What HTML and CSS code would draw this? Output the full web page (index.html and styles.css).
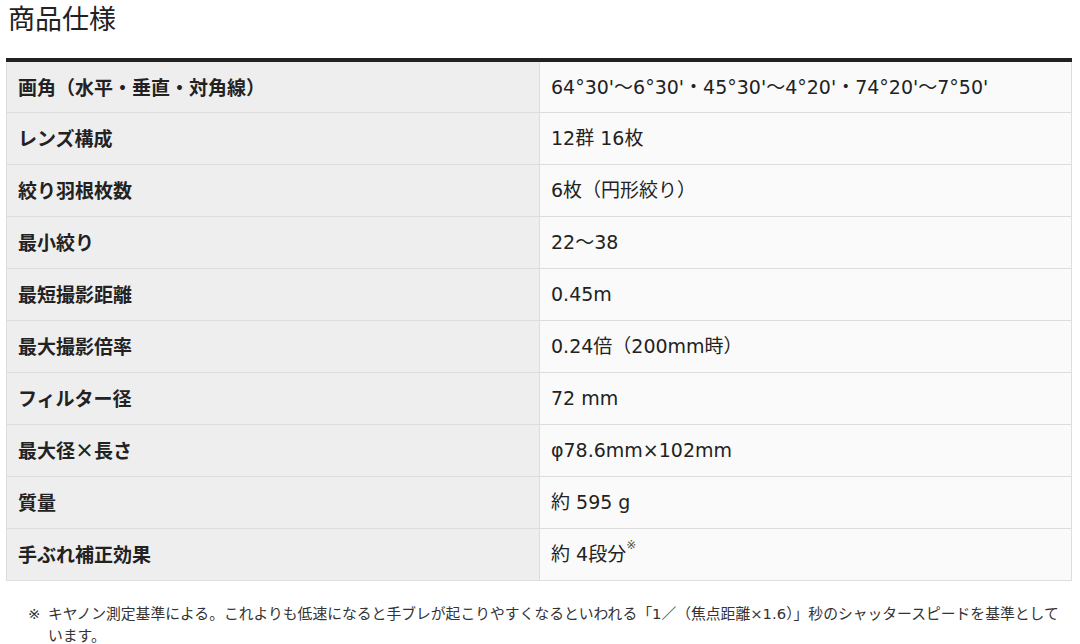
FILE: index.html
```html
<!DOCTYPE html>
<html lang="ja">
<head>
<meta charset="utf-8">
<link rel="stylesheet" href="styles.css">
</head>
<body>
<div class="page">
  <h2 class="title">商品仕様</h2>
  <table class="spec">
    <tbody>
      <tr><th>画角（水平・垂直・対角線）</th><td>64°30'～6°30'・45°30'～4°20'・74°20'～7°50'</td></tr>
      <tr><th>レンズ構成</th><td>12群 16枚</td></tr>
      <tr><th>絞り羽根枚数</th><td>6枚（円形絞り）</td></tr>
      <tr><th>最小絞り</th><td>22～38</td></tr>
      <tr><th>最短撮影距離</th><td>0.45m</td></tr>
      <tr><th>最大撮影倍率</th><td>0.24倍（200mm時）</td></tr>
      <tr><th>フィルター径</th><td>72 mm</td></tr>
      <tr><th>最大径×長さ</th><td>φ78.6mm×102mm</td></tr>
      <tr><th>質量</th><td>約 595 g</td></tr>
      <tr><th>手ぶれ補正効果</th><td>約 4段分<sup class="mark">※</sup></td></tr>
    </tbody>
  </table>
  <p class="note"><span class="note-mark">※</span>キヤノン測定基準による。これよりも低速になると手ブレが起こりやすくなるといわれる「1／（焦点距離×1.6）」秒のシャッタースピードを基準としています。</p>
</div>
</body>
</html>
```
FILE: styles.css
```css
html, body {
  margin: 0;
  padding: 0;
  background: #fff;
}
body {
  font-family: "DejaVu Sans", "Noto Sans CJK JP", sans-serif;
  color: #222;
}
.page {
  padding: 0 8px 0 6px;
}
.title {
  margin: 0;
  padding: 0 0 0 2px;
  font-family: "Noto Sans CJK JP", sans-serif;
  font-size: 27px;
  font-weight: normal;
  line-height: 36px;
  height: 58px;
  color: #222;
}
.spec {
  width: 1066px;
  border-collapse: collapse;
  border-top: 4px solid #222;
  border-left: 1px solid #ddd;
  border-right: 1px solid #ddd;
}
.spec th,
.spec td {
  height: 52px;
  padding: 0 12px 0 11px;
  box-sizing: border-box;
  border-bottom: 1px solid #ddd;
  text-align: left;
  vertical-align: middle;
  font-size: 19px;
  line-height: 24px;
}
.spec th {
  width: 533px;
  background: #eee;
  font-family: "Noto Sans CJK JP", sans-serif;
  font-weight: bold;
  color: #222;
  border-right: 1px solid #ddd;
}
.spec td {
  background: #fafafa;
  font-weight: normal;
  color: #222;
}
.mark {
  font-size: 12px;
  vertical-align: 12px;
  line-height: 0;
  color: #555;
}
.note {
  margin: 22px 0 0;
  padding: 0 4px 0 42px;
  text-indent: -20px;
  font-size: 14.8px;
  line-height: 22px;
  color: #333;
}
.note-mark {
  display: inline-block;
  width: 20px;
  text-indent: 0;
}
```
